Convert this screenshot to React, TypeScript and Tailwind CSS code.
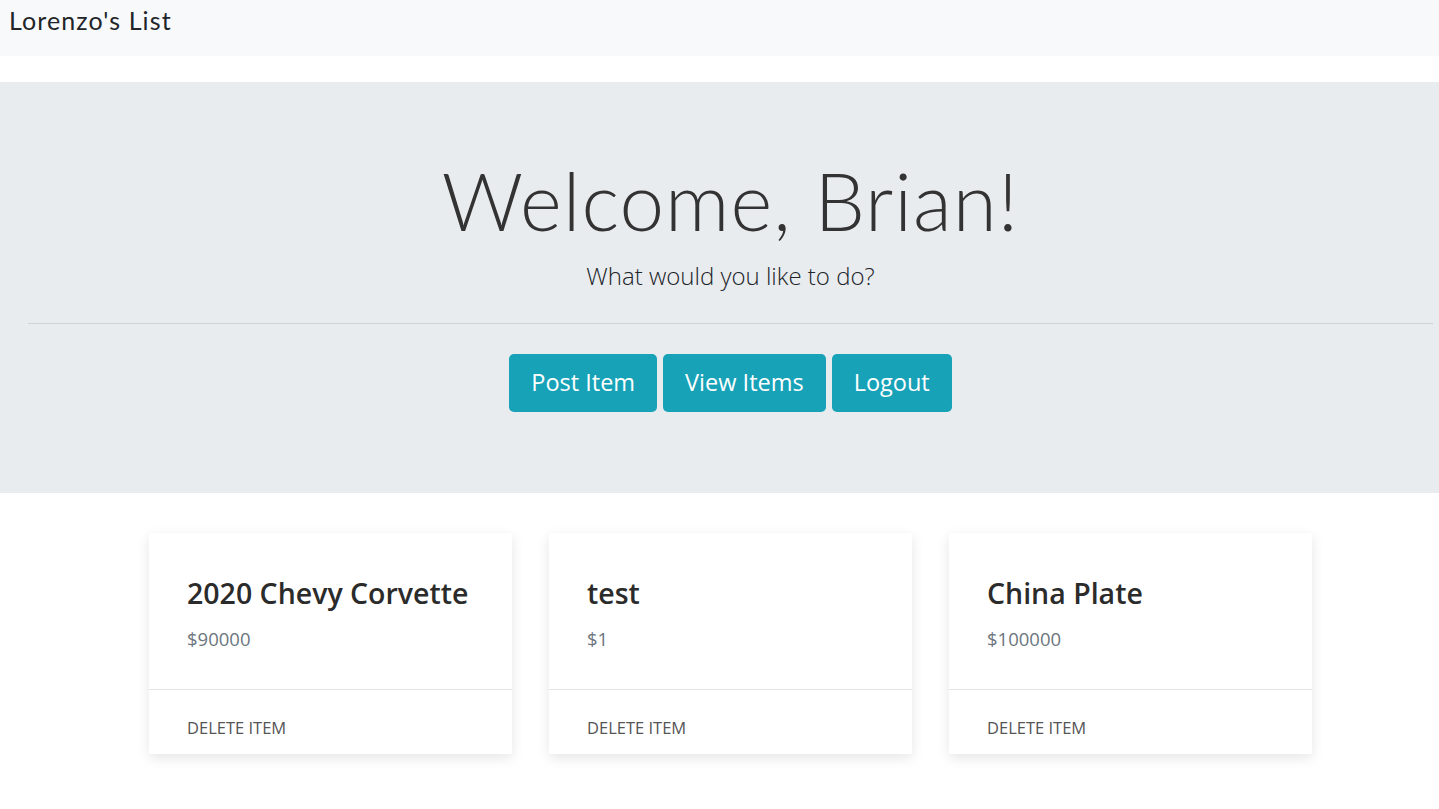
import React from "react";

interface Item {
  title: string;
  price: string;
}

const items: Item[] = [
  { title: "2020 Chevy Corvette", price: "$90000" },
  { title: "test", price: "$1" },
  { title: "China Plate", price: "$100000" },
];

const sans = "font-['Open_Sans',sans-serif]";

export default function App() {
  return (
    <div className="min-h-screen bg-white text-[#212529]">
      {/* navbar */}
      <nav className="h-[56px] bg-[#f8f9fa] px-[9px] pt-[2px]">
        <span className="font-['Lato',sans-serif] text-[25px] tracking-[1.1px] text-[#212529]">
          Lorenzo's List
        </span>
      </nav>

      {/* jumbotron */}
      <section className="mt-[26px] h-[411px] bg-[#e9ecef] pl-[28px] pr-[6px] pt-[70px]">
        <h1 className="text-center font-['Lato',sans-serif] text-[80px] font-light leading-[96px] tracking-[1px] text-[#333]">
          Welcome, Brian!
        </h1>
        <p className={`${sans} mt-[10px] text-center text-[24px] font-light text-[#212529]`}>
          What would you like to do?
        </p>
        <hr className="mt-[29px] border-t border-[#cfd3d7]" />
        <div className={`${sans} mt-[30px] flex justify-center gap-[6px]`}>
          {["Post Item", "View Items", "Logout"].map((b) => (
            <button
              key={b}
              className="h-[58px] rounded-[5px] bg-[#17a2b8] px-[22px] text-[23.5px] text-white"
            >
              {b}
            </button>
          ))}
        </div>
      </section>

      {/* items */}
      <div className={`${sans} mt-[40px] flex justify-center gap-[37px] pl-[22px]`}>
        {items.map((it) => (
          <div
            key={it.title}
            className="w-[363px] bg-white shadow-[0_4px_12px_rgba(0,0,0,0.1)]"
          >
            <div className="h-[157px] border-b border-[#e5e5e5] px-[38px] pt-[40px]">
              <h2 className="text-[28.5px] font-semibold leading-[40px] text-[#2b2b2b]">
                {it.title}
              </h2>
              <p className="mt-[12px] text-[18.5px] text-[#6c757d]">{it.price}</p>
            </div>
            <div className="h-[64px] px-[38px] pt-[26px] text-[16.5px] text-[#555]">
              DELETE ITEM
            </div>
          </div>
        ))}
      </div>
    </div>
  );
}
